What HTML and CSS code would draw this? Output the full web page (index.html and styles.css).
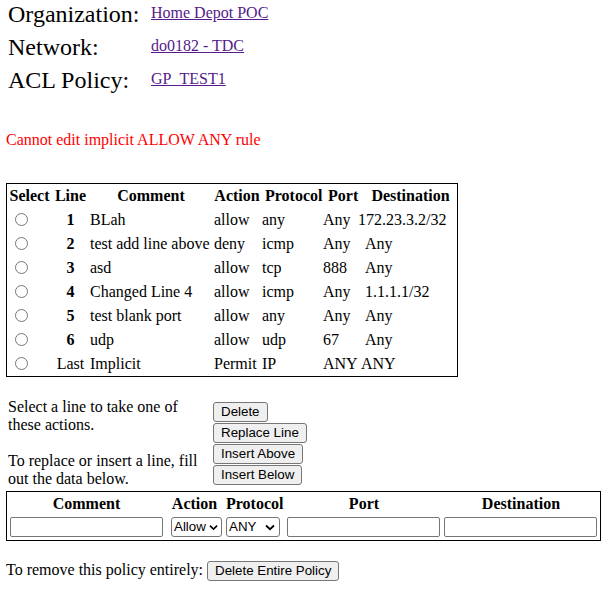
FILE: index.html
```html
<!DOCTYPE html>
<html>
<head>
<meta charset="utf-8">
<title>ACL Policy</title>
<link rel="stylesheet" href="styles.css">
</head>
<body>
<div class="info">
  <div class="label">Organization:</div><a class="val" href="#">Home Depot POC</a>
  <div class="label">Network:</div><a class="val" href="#">do0182 - TDC</a>
  <div class="label">ACL Policy:</div><a class="val" href="#">GP_TEST1</a>
</div>

<p class="error">Cannot edit implicit ALLOW ANY rule</p>

<table class="acl">
  <colgroup>
    <col class="c-sel"><col class="c-line"><col class="c-com"><col class="c-act"><col class="c-pro"><col class="c-port"><col class="c-dst">
  </colgroup>
  <tr><th>Select</th><th>Line</th><th>Comment</th><th>Action</th><th class="h-pro">Protocol</th><th class="h-port">Port</th><th class="h-dst">Destination</th></tr>
  <tr><td><input type="radio" name="line"></td><th>1</th><td>BLah</td><td>allow</td><td>any</td><td>Any</td><td>172.23.3.2/32</td></tr>
  <tr><td><input type="radio" name="line"></td><th>2</th><td>test add line above</td><td>deny</td><td>icmp</td><td>Any</td><td class="ind">Any</td></tr>
  <tr><td><input type="radio" name="line"></td><th>3</th><td>asd</td><td>allow</td><td>tcp</td><td>888</td><td class="ind">Any</td></tr>
  <tr><td><input type="radio" name="line"></td><th>4</th><td>Changed Line 4</td><td>allow</td><td>icmp</td><td>Any</td><td class="ind">1.1.1.1/32</td></tr>
  <tr><td><input type="radio" name="line"></td><th>5</th><td>test blank port</td><td>allow</td><td>any</td><td>Any</td><td class="ind">Any</td></tr>
  <tr><td><input type="radio" name="line"></td><th>6</th><td>udp</td><td>allow</td><td>udp</td><td>67</td><td class="ind">Any</td></tr>
  <tr><td><input type="radio" name="line"></td><td class="last">Last</td><td>Implicit</td><td>Permit</td><td>IP</td><td>ANY</td><td class="ind-s">ANY</td></tr>
</table>

<div class="actions">
  <div class="help">
    <p>Select a line to take one of these actions.</p>
    <p>To replace or insert a line, fill out the data below.</p>
  </div>
  <div class="btns">
    <button class="btn" type="button">Delete</button>
    <button class="btn" type="button">Replace Line</button>
    <button class="btn" type="button">Insert Above</button>
    <button class="btn" type="button">Insert Below</button>
  </div>
</div>

<table class="entry">
  <tr><th>Comment</th><th>Action</th><th>Protocol</th><th>Port</th><th>Destination</th></tr>
  <tr>
    <td><input class="txt" type="text"></td>
    <td><span class="selwrap sw-act"><select class="sel sel-act"><option>Allow</option><option>Deny</option></select><svg class="chev" width="10" height="7" viewBox="0 0 10 7"><path d="M1 1.5 L5 5.2 L9 1.5" fill="none" stroke="#000" stroke-width="1.8"/></svg></span></td>
    <td><span class="selwrap sw-pro"><select class="sel sel-pro"><option>ANY</option><option>TCP</option><option>UDP</option><option>ICMP</option></select><svg class="chev" width="10" height="7" viewBox="0 0 10 7"><path d="M1 1.5 L5 5.2 L9 1.5" fill="none" stroke="#000" stroke-width="1.8"/></svg></span></td>
    <td><input class="txt" type="text"></td>
    <td><input class="txt" type="text"></td>
  </tr>
</table>

<p class="remove">To remove this policy entirely: <button class="btn" type="button">Delete Entire Policy</button></p>
</body>
</html>
```

FILE: styles.css
```css
body {
  margin: 0;
  font-family: "Liberation Serif", "Times New Roman", serif;
  font-size: 16px;
  color: #000;
  background: #fff;
}

.info {
  display: grid;
  grid-template-columns: 143px auto;
  row-gap: 5px;
  padding-left: 8px;
  align-items: start;
}
.label {
  font-size: 24px;
  line-height: 28px;
}
.val {
  justify-self: start;
  padding-top: 4px;
  font-size: 16px;
  line-height: 18px;
  color: #551a8b;
}

.error {
  margin: 37px 0 0;
  padding-left: 6px;
  line-height: 18px;
  color: #ff0000;
}

.acl {
  margin: 34px 0 0 6px;
  width: 452px;
  table-layout: fixed;
  border: 1px solid #000;
  border-spacing: 0;
}
.c-sel { width: 45px; }
.c-line { width: 37px; }
.c-com { width: 124px; }
.c-act { width: 48px; }
.c-pro { width: 61px; }
.c-port { width: 35px; }
.c-dst { width: 100px; }
.acl tr { height: 24px; }
.acl th, .acl td {
  padding: 0 1px;
  white-space: nowrap;
  line-height: 18px;
}
.acl th.h-pro { padding-left: 4px; }
.acl th.h-port { padding-left: 6px; }
.acl th.h-dst { padding-left: 8px; }
.acl td { text-align: left; }
.acl td:first-child { padding-left: 3px; }
.acl td.last { text-align: center; }
.acl td.ind { padding-left: 8px; }
.acl td.ind-s { padding-left: 4px; }
.acl input[type="radio"] {
  margin: 3px 3px 0 5px;
  width: 13px;
  height: 13px;
}

.actions {
  display: flex;
  align-items: center;
  gap: 9px;
  margin-top: 21px;
  padding-left: 8px;
}
.help {
  width: 196px;
  line-height: 18px;
}
.help p { margin: 0; }
.help p + p { margin-top: 18px; }
.btns {
  display: flex;
  flex-direction: column;
  align-items: flex-start;
  gap: 1px;
}

.btn {
  font-family: "Liberation Sans", Arial, sans-serif;
  font-size: 13.333px;
  line-height: 16px;
  height: 20px;
  padding: 1px 7px;
  border: 1px solid #767676;
  border-radius: 3px;
  background: #efefef;
  color: #000;
}

.entry {
  margin: 3px 0 0 6px;
  width: 595px;
  border: 1px solid #000;
  border-spacing: 2px;
}
.entry th, .entry td {
  padding: 1px;
  line-height: 18px;
}
.txt {
  box-sizing: border-box;
  width: 153px;
  height: 20px;
  margin: 0;
  padding: 1px 2px;
  border: 1px solid #767676;
  border-radius: 2px;
  font-family: "Liberation Sans", Arial, sans-serif;
  font-size: 13.333px;
  display: block;
}
.selwrap {
  position: relative;
  display: block;
}
.sw-act { margin-left: 4px; width: 51px; }
.sw-pro { margin-right: 3px; width: 54px; }
.sel {
  -webkit-appearance: none;
  appearance: none;
  box-sizing: border-box;
  display: block;
  width: 100%;
  height: 20px;
  margin: 0;
  padding: 0 0 0 2px;
  border: 1px solid #767676;
  border-radius: 3px;
  background: #fff;
  font-family: "Liberation Sans", Arial, sans-serif;
  font-size: 13.333px;
  line-height: 18px;
  color: #000;
}
.chev {
  position: absolute;
  top: 7px;
  pointer-events: none;
}
.sw-act .chev { left: 38px; width: 9px; }
.sw-pro .chev { left: 39px; }

.remove {
  margin: 18px 0 0;
  padding-left: 6px;
  line-height: 22px;
}
```
